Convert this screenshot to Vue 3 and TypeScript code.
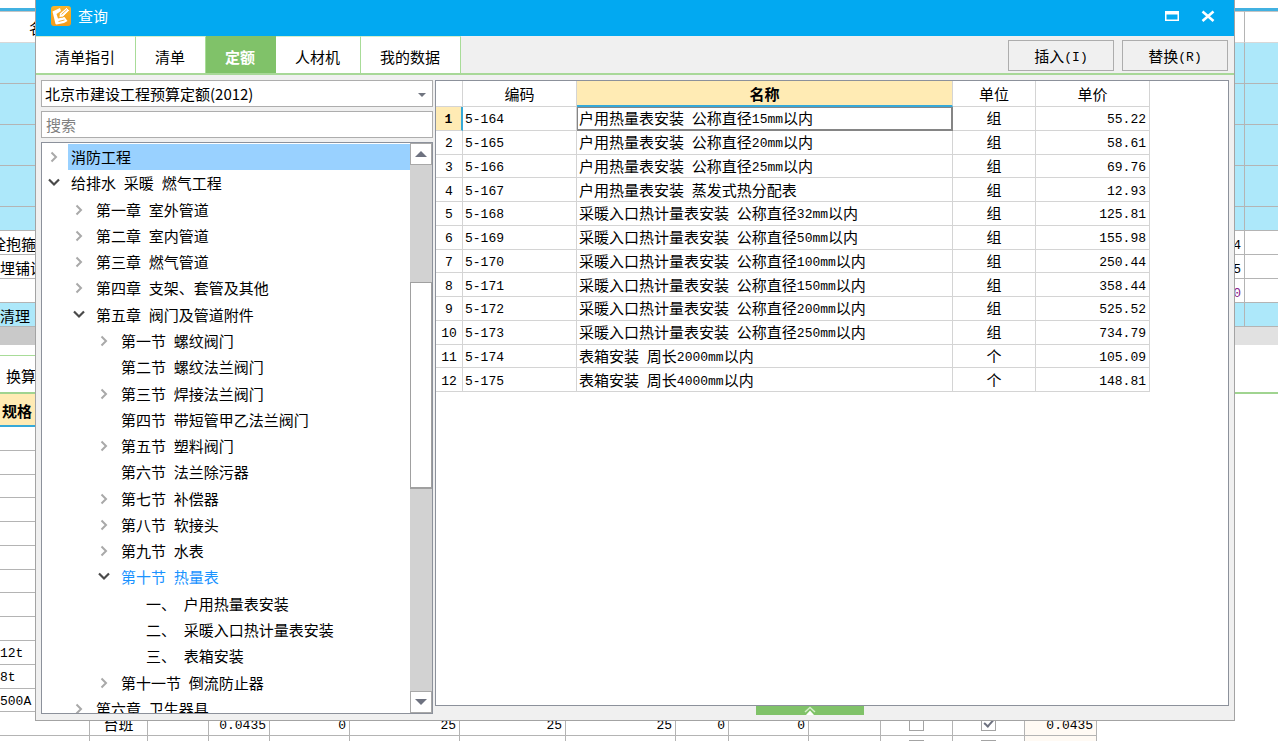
<script setup lang="ts">
import { h, ref } from 'vue'

interface TreeNode {
  label: string
  level: number
  state: 'open' | 'closed' | 'leaf'
  kind?: 'selected' | 'current'
}

// Sets half-width characters in the monospaced face and leaves the rest as CJK text.
const Mixed = (props: { text: string }) =>
  h(
    'span',
    { class: 'mixed' },
    (props.text.match(/[\x20-\x7e]+|[^\x20-\x7e]+/g) ?? []).map((run) =>
      /^[\x20-\x7e]/.test(run) ? h('span', { class: 'half' }, run) : run,
    ),
  )
Mixed.props = ['text']

const tabs = ['清单指引', '清单', '定额', '人材机', '我的数据']
const activeTab = ref('定额')
const keyword = ref('')

const tree: TreeNode[] = [
  { label: '消防工程', level: 0, state: 'closed', kind: 'selected' },
  { label: '给排水 采暖 燃气工程', level: 0, state: 'open' },
  { label: '第一章 室外管道', level: 1, state: 'closed' },
  { label: '第二章 室内管道', level: 1, state: 'closed' },
  { label: '第三章 燃气管道', level: 1, state: 'closed' },
  { label: '第四章 支架、套管及其他', level: 1, state: 'closed' },
  { label: '第五章 阀门及管道附件', level: 1, state: 'open' },
  { label: '第一节 螺纹阀门', level: 2, state: 'closed' },
  { label: '第二节 螺纹法兰阀门', level: 2, state: 'leaf' },
  { label: '第三节 焊接法兰阀门', level: 2, state: 'closed' },
  { label: '第四节 带短管甲乙法兰阀门', level: 2, state: 'leaf' },
  { label: '第五节 塑料阀门', level: 2, state: 'closed' },
  { label: '第六节 法兰除污器', level: 2, state: 'leaf' },
  { label: '第七节 补偿器', level: 2, state: 'closed' },
  { label: '第八节 软接头', level: 2, state: 'closed' },
  { label: '第九节 水表', level: 2, state: 'closed' },
  { label: '第十节 热量表', level: 2, state: 'open', kind: 'current' },
  { label: '一、 户用热量表安装', level: 3, state: 'leaf' },
  { label: '二、 采暖入口热计量表安装', level: 3, state: 'leaf' },
  { label: '三、 表箱安装', level: 3, state: 'leaf' },
  { label: '第十一节 倒流防止器', level: 2, state: 'closed' },
  { label: '第六章 卫生器具', level: 1, state: 'closed' },
]

const items = [
  ['5-164', '户用热量表安装 公称直径15mm以内', '组', '55.22'],
  ['5-165', '户用热量表安装 公称直径20mm以内', '组', '58.61'],
  ['5-166', '户用热量表安装 公称直径25mm以内', '组', '69.76'],
  ['5-167', '户用热量表安装 蒸发式热分配表', '组', '12.93'],
  ['5-168', '采暖入口热计量表安装 公称直径32mm以内', '组', '125.81'],
  ['5-169', '采暖入口热计量表安装 公称直径50mm以内', '组', '155.98'],
  ['5-170', '采暖入口热计量表安装 公称直径100mm以内', '组', '250.44'],
  ['5-171', '采暖入口热计量表安装 公称直径150mm以内', '组', '358.44'],
  ['5-172', '采暖入口热计量表安装 公称直径200mm以内', '组', '525.52'],
  ['5-173', '采暖入口热计量表安装 公称直径250mm以内', '组', '734.79'],
  ['5-174', '表箱安装 周长2000mm以内', '个', '105.09'],
  ['5-175', '表箱安装 周长4000mm以内', '个', '148.81'],
]

const sheetRows = [
  { cls: 'head', name: '名', value: '' },
  { cls: 'blue tall', name: '', value: '' },
  { cls: 'blue tall', name: '', value: '' },
  { cls: 'blue tall', name: '', value: '' },
  { cls: 'blue tall', name: '', value: '' },
  { cls: 'blue', name: '', value: '' },
  { cls: 'cut', name: '栓抱箍', value: '4' },
  { cls: '', name: '埋铺设', value: '5' },
  { cls: 'purple', name: '', value: '0' },
  { cls: 'blue', name: '清理', value: '' },
]

const specs = ['', '', '', '', '', '', '', '', '', '12t', '8t', '500A']
const usage = ['', '台班', '', '0.0435', '0', '25', '25', '25', '0', '0', '']
</script>

<template>
  <div class="screen">
    <div class="backdrop">
      <div class="ribbon"></div>
      <table class="sheet">
        <colgroup><col class="c-name" /><col /><col class="c-rest" /></colgroup>
        <tbody>
          <tr v-for="(r, i) in sheetRows" :key="i" :class="r.cls">
            <td class="s-name">{{ r.name }}</td>
            <td class="s-value"><Mixed :text="r.value" /></td>
            <td></td>
          </tr>
        </tbody>
      </table>
      <div class="hbar"><span></span></div>
      <div class="gap"></div>
      <div class="subtabs">换算</div>
      <table class="detail">
        <colgroup>
          <col class="d1" /><col class="d2" /><col class="d3" /><col class="d3" /><col class="d4" />
          <col class="d5" /><col class="d6" /><col class="d5" /><col class="d7" /><col class="d4" />
          <col class="d8" /><col class="d8" /><col class="d8" /><col class="d8" />
        </colgroup>
        <thead>
          <tr><th>规格</th><th colspan="13"></th></tr>
        </thead>
        <tbody>
          <tr v-for="(s, i) in specs" :key="i">
            <td><Mixed :text="s" /></td><td colspan="13"></td>
          </tr>
          <tr>
            <td v-for="(u, i) in usage" :key="i" :class="i === 1 ? 'mid' : 'num'"><Mixed :text="u" /></td>
            <td class="mid"><input type="checkbox" aria-label="暂估" /></td>
            <td class="mid"><input type="checkbox" aria-label="计价" checked /></td>
            <td class="num warm"><Mixed text="0.0435" /></td>
          </tr>
          <tr>
            <td v-for="n in 11" :key="n"></td>
            <td class="mid"><input type="checkbox" aria-label="暂估" /></td>
            <td class="mid"><input type="checkbox" aria-label="计价" /></td>
            <td class="warm"></td>
          </tr>
        </tbody>
      </table>
    </div>

    <section class="dialog" role="dialog" aria-label="查询">
      <header class="titlebar">
        <svg class="logo" viewBox="0 0 20 20" width="20" height="20">
          <defs>
            <linearGradient id="amber" x1="0" y1="0" x2="0" y2="1">
              <stop offset="0" stop-color="#f9b52c" />
              <stop offset="1" stop-color="#f49a1a" />
            </linearGradient>
          </defs>
          <rect width="20" height="20" rx="3" fill="url(#amber)" />
          <path d="M1.500 5.500 9 2l1 3-4.500 3 1.500 4.500 6.500-1.500 3 4-3.500 2-7.500 1.500-1-.5z" fill="#fff" />
          <path d="M8 11.500 8.500 7.500 15.500 1.500 18.500 4.500 12 11z" fill="#fff" stroke="#f6a522" stroke-width=".8" />
          <path d="M10.500 8.500 16 3.500M7.500 15.500 13.500 14" stroke="#f6a522" stroke-width=".9" />
        </svg>
        <h1>查询</h1>
        <button class="win" aria-label="最大化">
          <svg viewBox="0 0 16 16" width="16" height="16">
            <path d="M1 3h14v10H1z M2.500 6.500v5h11v-5z" fill="#fff" fill-rule="evenodd" />
          </svg>
        </button>
        <button class="win" aria-label="关闭">
          <svg viewBox="0 0 16 16" width="16" height="16">
            <path d="M2.500 3.500 13.500 13M13.500 3.500 2.500 13" stroke="#fff" stroke-width="2.600" />
          </svg>
        </button>
      </header>

      <nav class="toolbar">
        <button
          v-for="t in tabs"
          :key="t"
          class="tab"
          :class="{ active: t === activeTab }"
          @click="activeTab = t"
        >{{ t }}</button>
        <span class="spacer"></span>
        <button class="action"><Mixed text="插入(I)" /></button>
        <button class="action"><Mixed text="替换(R)" /></button>
      </nav>

      <div class="content">
        <aside class="side">
          <div class="combo">
            <select aria-label="定额库"><option>北京市建设工程预算定额(2012)</option></select>
            <svg class="caret" viewBox="0 0 8 4" width="8" height="4"><path d="M0 0h8L4 4z" fill="#707580" /></svg>
          </div>
          <input v-model="keyword" class="search" type="text" placeholder="搜索" aria-label="搜索" />
          <div class="treebox">
            <ul class="tree">
              <li v-for="n in tree" :key="n.label" :class="['lv' + n.level, n.kind]">
                <span class="twist">
                  <svg v-if="n.state === 'closed'" viewBox="0 0 12 12" width="12" height="12">
                    <path d="M3.500 1.500 8 6l-4.500 4.500" fill="none" stroke="#a9a9a9" stroke-width="2" />
                  </svg>
                  <svg v-else-if="n.state === 'open'" viewBox="0 0 12 12" width="12" height="12">
                    <path d="M1 2.500 6 7.500l5-5" fill="none" stroke="#4a4a4a" stroke-width="2.200" />
                  </svg>
                </span>
                <span class="label"><Mixed :text="n.label" /></span>
              </li>
            </ul>
            <div class="scroll">
              <button aria-label="向上滚动">
                <svg viewBox="0 0 12 6" width="12" height="6"><path d="M6 0l6 6H0z" fill="#6e7280" /></svg>
              </button>
              <div class="track"><div class="thumb"></div></div>
              <button aria-label="向下滚动">
                <svg viewBox="0 0 12 6" width="12" height="6"><path d="M0 0h12L6 6z" fill="#6e7280" /></svg>
              </button>
            </div>
          </div>
        </aside>

        <main class="panel">
          <table class="grid">
            <colgroup>
              <col class="g-no" /><col class="g-code" /><col class="g-name" /><col class="g-unit" /><col class="g-price" />
            </colgroup>
            <thead>
              <tr><th></th><th>编码</th><th class="hot">名称</th><th>单位</th><th>单价</th></tr>
            </thead>
            <tbody>
              <tr v-for="(row, i) in items" :key="row[0]" :class="{ first: i === 0 }">
                <td class="no"><Mixed :text="String(i + 1)" /></td>
                <td><Mixed :text="row[0]" /></td>
                <td class="name"><Mixed :text="row[1]" /></td>
                <td class="mid">{{ row[2] }}</td>
                <td class="num"><Mixed :text="row[3]" /></td>
              </tr>
            </tbody>
          </table>
        </main>
      </div>
      <footer class="foot">
        <button class="handle" aria-label="展开">
          <svg viewBox="0 0 12 9" width="12" height="9">
            <path d="M1 6 6 1.500 11 6" fill="none" stroke="#d5efca" stroke-width="1.500" />
            <path d="M6 4.500 10 9H2z" fill="#fff" />
          </svg>
        </button>
      </footer>
    </section>
  </div>
</template>

<style>
html,
body {
  margin: 0;
  overflow: hidden;
}
.mixed {
  white-space: pre;
}
.mixed .half {
  font-family: 'Liberation Mono', monospace;
  font-size: 13px;
  line-height: 1;
  vertical-align: 1px;
}
</style>

<style scoped>
.screen {
  position: relative;
  height: 100vh;
  overflow: hidden;
  background: #fff;
  color: #000;
  font: 15px/20px 'Noto Sans CJK SC', sans-serif;
}
.screen * {
  box-sizing: border-box;
}
button,
input,
select {
  font: inherit;
  color: inherit;
  border-radius: 0;
  margin: 0;
  padding: 0;
}
table {
  border-collapse: separate;
  border-spacing: 0;
  table-layout: fixed;
}
td,
th {
  padding: 0;
  overflow: hidden;
  white-space: nowrap;
}

/* worksheet behind the dialog */
.backdrop {
  height: 100%;
  overflow: hidden;
}
.ribbon {
  height: 11px;
  border-bottom: 3px solid #41b1e1;
}
.sheet {
  width: 100%;
}
.c-name {
  width: 36px;
}
.c-rest {
  width: 33px;
}
.sheet td {
  height: 24px;
  padding-top: 2px;
  border-bottom: 1px solid #b4b4b4;
}
.sheet .s-value {
  border-right: 1px solid #b4b4b4;
  text-align: right;
  padding-right: 3px;
}
.sheet .head td {
  height: 32px;
  border-top: 1px solid #c4c4c4;
  border-bottom-color: #d8d8d8;
}
.head .s-name {
  text-indent: 29px;
}
.cut .s-name {
  text-indent: -9px;
}
.blue td {
  background: #ade8fa;
}
.sheet .tall td {
  height: 41px;
}
.purple .s-value {
  color: #8a1a8a;
}
.hbar {
  height: 18px;
  background: #e1e1e1;
}
.hbar span {
  display: block;
  width: 20%;
  height: 100%;
  background: #c9c9c9;
}
.gap {
  width: 90%;
  height: 11px;
  border-bottom: 1px solid #a8dc98;
}
.subtabs {
  height: 38px;
  padding-left: 6px;
  line-height: 40px;
  border-bottom: 2px solid #a0d490;
}
.detail {
  width: 1097px;
  height: 366px;
}
.d1 {
  width: 90px;
}
.d2 {
  width: 58px;
}
.d3 {
  width: 61px;
}
.d4 {
  width: 80px;
}
.d5 {
  width: 110px;
}
.d6 {
  width: 106px;
}
.d7 {
  width: 53px;
}
.d8 {
  width: 72px;
}
.detail th {
  height: 33px;
  padding: 2px 0 0 2px;
  text-align: left;
  background: #ffebb4;
  border-bottom: 2px solid #36a9d8;
}
.detail td {
  height: 23px;
  line-height: 18px;
  border-right: 1px solid #b4b4b4;
  border-bottom: 1px solid #b4b4b4;
}
.mid {
  text-align: center;
}
.detail .num {
  padding-right: 3px;
  text-align: right;
}
.detail .warm {
  background: #fffaf4;
}
.detail input {
  appearance: none;
  position: relative;
  display: block;
  width: 15px;
  height: 15px;
  margin: 0 auto;
  border: 1px solid #a4a4a4;
  background: #fff;
}
.detail input:checked::after {
  content: '';
  position: absolute;
  left: 4px;
  top: 0;
  width: 4px;
  height: 8px;
  border: solid #6e7280;
  border-width: 0 2px 2px 0;
  transform: rotate(42deg);
}

/* dialog */
.dialog {
  position: absolute;
  inset: 0 43px 20px 35px;
  display: flex;
  flex-direction: column;
  background: #f0f0f0;
  border: 1px solid #a3a3a3;
  border-top: 0;
}
.titlebar {
  display: flex;
  align-items: center;
  height: 36px;
  padding: 0 18px 4px 15px;
  background: #02a9f1;
  color: #fff;
}
.titlebar h1 {
  flex: 1;
  margin: 0 0 0 7px;
  font-size: 15px;
  font-weight: 400;
}
.win {
  display: flex;
  margin-left: 20px;
  border: 0;
  background: none;
}
.toolbar {
  display: flex;
  align-items: center;
  height: 39px;
  padding-right: 6px;
  border-bottom: 2px solid #a8d898;
}
.tab {
  height: 37px;
  padding: 3px 20px 0 19px;
  border: 0;
  border-right: 1px solid #a8dc98;
  border-top: 1px solid #d5efcc;
  background: #fff;
}
.tab.active {
  background: #80c269;
  border-color: #80c269;
  color: #fff;
  font-weight: 700;
}
.spacer {
  flex: 1;
}
.action {
  width: 106px;
  height: 31px;
  margin: 2px 0 0 8px;
  border: 1px solid #adadad;
  background: #f0f0f0;
}
.content {
  flex: 1;
  min-height: 0;
  display: flex;
  gap: 2px;
  padding: 5px 5px 0;
}
.side {
  width: 392px;
  display: flex;
  flex-direction: column;
  gap: 4px;
  margin-bottom: -8px;
}
.combo {
  position: relative;
  height: 27px;
  background: #fff;
  border: 1px solid #adadad;
}
.combo select {
  appearance: none;
  display: block;
  width: 100%;
  height: 25px;
  padding-left: 3px;
  border: 0;
  background: none;
}
.caret {
  position: absolute;
  right: 6px;
  top: 12px;
}
.search {
  width: 100%;
  height: 27px;
  padding: 0 4px;
  border: 1px solid #adadad;
  background: #fff;
}
.search::placeholder {
  color: #808080;
  opacity: 1;
}
.treebox {
  flex: 1;
  min-height: 0;
  display: flex;
  overflow: hidden;
  background: #fff;
  border: 1px solid #8c919b;
}
.tree {
  flex: 1;
  display: grid;
  grid-auto-rows: 1fr;
  height: calc(100% + 9px);
  margin: 0;
  padding: 1px 0 0;
  list-style: none;
}
.tree li {
  display: flex;
  align-items: stretch;
  min-height: 0;
}
.lv0 {
  padding-left: 6px;
}
.lv1 {
  padding-left: 31px;
}
.lv2 {
  padding-left: 56px;
}
.lv3 {
  padding-left: 81px;
}
.twist {
  width: 20px;
  display: flex;
  align-items: center;
}
.label {
  flex: 1;
  display: flex;
  align-items: center;
  padding-left: 3px;
}
.selected .label {
  background: #99d1ff;
}
.current {
  color: #1a93ff;
}
.scroll {
  width: 22px;
  display: flex;
  flex-direction: column;
  background: #d2d2d2;
}
.scroll button {
  display: flex;
  align-items: center;
  justify-content: center;
  height: 22px;
  border: 1px solid #a8a8a8;
  background: #fff;
}
.track {
  flex: 1;
  padding-top: 117px;
}
.thumb {
  height: 207px;
  border: 1px solid #a0a0a0;
  border-bottom-width: 2px;
  background: #fff;
}
.panel {
  flex: 1;
  min-width: 0;
  overflow: hidden;
  background: #fff;
  border: 1px solid #8c919b;
}
.grid {
  width: 714px;
  height: 311px;
}
.g-no {
  width: 27px;
}
.g-code {
  width: 114px;
}
.g-name {
  width: 376px;
}
.g-unit {
  width: 83px;
}
.g-price {
  width: 114px;
}
.grid th {
  height: 26px;
  padding-top: 1px;
  font-weight: 400;
  border-right: 1px solid #d4d4d4;
  border-bottom: 1px solid #d4d4d4;
}
.grid .hot {
  font-weight: 700;
  background: #ffebb4;
  border-bottom: 2px solid #36a9d8;
}
.grid td {
  height: 23px;
  padding-left: 2px;
  line-height: 18px;
  border-right: 1px solid #d4d4d4;
  border-bottom: 1px solid #d4d4d4;
}
.grid .no {
  padding: 0;
  text-align: center;
}
.grid .mid {
  padding: 0;
}
.grid .num {
  padding-right: 3px;
  text-align: right;
}
.grid .first .no {
  font-weight: 700;
  background: #ffebb4;
  border-right: 2px solid #36a9d8;
}
.grid .first .name {
  padding-left: 1px;
  border: 1px solid #858585;
  border-width: 1px 2px 2px 1px;
}
.foot {
  height: 14px;
  display: flex;
  justify-content: center;
  padding-left: 350px;
}
.handle {
  display: flex;
  justify-content: center;
  width: 108px;
  height: 9px;
  border: 0;
  background: #80c269;
}
</style>
